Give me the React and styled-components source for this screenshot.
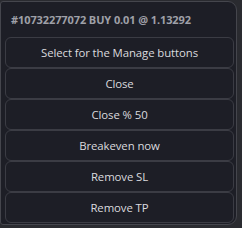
import React from "react";
import styled, { createGlobalStyle } from "styled-components";

const Global = createGlobalStyle`
  html, body {
    margin: 0;
    padding: 0;
    background: #2a2b30;
  }
  body {
    font-family: "Open Sans", "Liberation Sans", sans-serif;
  }
`;

const Panel = styled.div`
  width: 237px;
  height: 224px;
  margin-top: 1px;
  box-sizing: border-box;
  background: #1d1e26;
  border: 1px solid #45464d;
  border-radius: 3px 9px 9px 3px;
  display: flex;
  flex-direction: column;
`;

const Header = styled.div`
  height: 35px;
  padding-left: 10px;
  display: flex;
  align-items: center;
  font-size: 11px;
  font-weight: 700;
  color: #9fa0a8;
  letter-spacing: -0.1px;
`;

const List = styled.div`
  display: flex;
  flex-direction: column;
  padding-left: 4px;
`;

const Button = styled.button`
  width: 229px;
  height: 31px;
  box-sizing: border-box;
  background: #1d1e26;
  border: 1px solid #3b3c44;
  border-radius: 6px;
  color: #dadade;
  font-family: "Open Sans", "Liberation Sans", sans-serif;
  font-size: 11.4px;
  letter-spacing: -0.1px;
  padding: 0;
  text-align: center;
  cursor: pointer;
`;

const actions = [
  "Select for the Manage buttons",
  "Close",
  "Close % 50",
  "Breakeven now",
  "Remove SL",
  "Remove TP",
];

export default function App() {
  return (
    <>
      <Global />
      <Panel>
        <Header>#10732277072 BUY 0.01 @ 1.13292</Header>
        <List>
          {actions.map((a) => (
            <Button key={a}>{a}</Button>
          ))}
        </List>
      </Panel>
    </>
  );
}
